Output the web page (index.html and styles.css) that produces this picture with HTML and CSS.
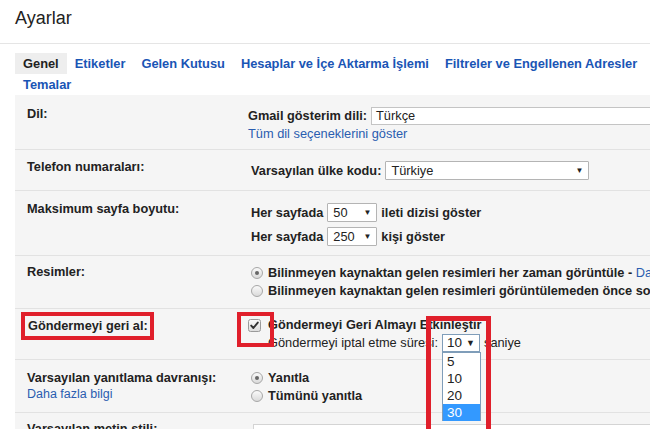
FILE: index.html
```html
<!DOCTYPE html>
<html lang="tr">
<head>
<meta charset="utf-8">
<title>Ayarlar</title>
<link rel="stylesheet" href="styles.css">
</head>
<body>
<h1 class="title">Ayarlar</h1>
<div class="divider"></div>
<nav class="tabs">
  <span class="tab tab-active">Genel</span>
  <span class="tab">Etiketler</span>
  <span class="tab">Gelen Kutusu</span>
  <span class="tab">Hesaplar ve İçe Aktarma İşlemi</span>
  <span class="tab">Filtreler ve Engellenen Adresler</span>
  <span class="tab">Temalar</span>
</nav>
<div class="settings">
  <div class="row row-dil">
    <div class="label">Dil:</div>
    <div class="value">
      <div class="line"><b>Gmail gösterim dili:</b><span class="textbox">Türkçe</span></div>
      <div class="line-link"><span class="link">Tüm dil seçeneklerini göster</span></div>
    </div>
  </div>
  <div class="row row-tel">
    <div class="label">Telefon numaraları:</div>
    <div class="value indent">
      <div class="line"><b>Varsayılan ülke kodu:</b><span class="select select-country"><span>Türkiye</span><span class="arrow">▼</span></span></div>
    </div>
  </div>
  <div class="row row-max">
    <div class="label">Maksimum sayfa boyutu:</div>
    <div class="value indent">
      <div class="line"><b>Her sayfada</b><span class="select select-small"><span>50</span><span class="arrow">▼</span></span><b>ileti dizisi göster</b></div>
      <div class="line line-gap"><b>Her sayfada</b><span class="select select-small"><span>250</span><span class="arrow">▼</span></span><b>kişi göster</b></div>
    </div>
  </div>
  <div class="row row-img">
    <div class="label">Resimler:</div>
    <div class="value indent">
      <div class="line line-radio"><span class="radio radio-on"></span><b>Bilinmeyen kaynaktan gelen resimleri her zaman görüntüle - <span class="link">Daha fazla bilgi</span></b></div>
      <div class="line line-radio"><span class="radio"></span><b>Bilinmeyen kaynaktan gelen resimleri görüntülemeden önce sor</b></div>
    </div>
  </div>
  <div class="row row-undo">
    <div class="label"><span class="mark">Göndermeyi geri al:</span></div>
    <div class="value">
      <div class="line"><span class="check"><svg width="13" height="13" viewBox="0 0 13 13"><defs><linearGradient id="cb" x1="0" y1="0" x2="0" y2="1"><stop offset="0" stop-color="#fbfbfb"/><stop offset="1" stop-color="#dcdcdc"/></linearGradient></defs><rect x="0.5" y="0.5" width="12" height="12" rx="2" fill="url(#cb)" stroke="#9a9a9a"/><path d="M3.2 6.6 L5.4 9 L9.8 3.6" fill="none" stroke="#333" stroke-width="1.9" stroke-linecap="round" stroke-linejoin="round"/></svg></span><b class="check-text">Göndermeyi Geri Almayı Etkinleştir</b></div>
      <div class="line line-sub"><span>Göndermeyi iptal etme süresi:</span><span class="duration"><span class="duration-box"><span>10</span><span class="arrow arrow-dark">▼</span></span><span class="duration-list"><span class="opt">5</span><span class="opt">10</span><span class="opt">20</span><span class="opt opt-on">30</span></span><span class="callout"></span></span><span>saniye</span></div>
    </div>
  </div>
  <div class="row row-reply">
    <div class="label"><div>Varsayılan yanıtlama davranışı:</div><div class="link">Daha fazla bilgi</div></div>
    <div class="value indent">
      <div class="line line-radio"><span class="radio radio-on"></span><b>Yanıtla</b></div>
      <div class="line line-radio"><span class="radio"></span><b>Tümünü yanıtla</b></div>
    </div>
  </div>
  <div class="row row-style">
    <div class="label">Varsayılan metin stili:</div>
    <div class="value"><div class="editor"></div></div>
  </div>
</div>
</body>
</html>
```
FILE: styles.css
```css
* { box-sizing: border-box; }
html, body { margin: 0; }
body {
  width: 650px;
  height: 429px;
  overflow: hidden;
  background: #fff;
  color: #222;
  font-family: "Liberation Sans", Arial, sans-serif;
}
.title {
  margin: 0;
  padding: 6px 0 13px 15px;
  font-size: 18px;
  font-weight: normal;
  line-height: 24px;
  color: #222;
}
.divider { height: 1px; background: #e5e5e5; }
.tabs {
  display: flex;
  flex-wrap: wrap;
  margin-top: 9px;
  padding-left: 15px;
  font-size: 12.85px;
  font-weight: bold;
  line-height: 21px;
}
.tab { padding: 0 8px; color: #1a55b5; white-space: nowrap; }
.tab-active { background: #eeeeee; color: #222; }

.settings {
  margin-left: 15px;
  background: #f5f5f5;
  font-size: 12.8px;
}
.row {
  display: grid;
  grid-template-columns: 233px 1fr;
  border-bottom: 1px solid #e2e2e2;
}
.label {
  padding-left: 12px;
  font-weight: bold;
  font-size: 12.75px;
  line-height: 17px;
  white-space: nowrap;
}
.label .link { font-weight: normal; font-size: 12.5px; }
.value { white-space: nowrap; line-height: 18px; }
.value.indent { padding-left: 3px; }
.line { display: flex; align-items: center; height: 18px; gap: 4px; }
.line-radio { gap: 5px; }
.line-link { line-height: 17px; }
.link { color: #2a5db0; font-weight: normal; font-size: 12.8px; }
b { font-weight: bold; font-size: 12.75px; }

.row-dil .label { padding-top: 10px; }
.row-dil .value { padding-top: 12px; padding-bottom: 7px; }
.row-tel .label { padding-top: 8px; }
.row-tel .value { padding-top: 11px; padding-bottom: 10px; }
.row-tel .line { height: 19px; }
.row-max .label { padding-top: 9px; }
.row-max .value { padding-top: 12px; padding-bottom: 9px; }
.row-max .line { height: 19px; }
.row-max .line-gap { margin-top: 5px; }
.row-img .label { padding-top: 7px; }
.row-img .value { padding-top: 8px; padding-bottom: 8px; }
.row-undo .label { padding-top: 9px; line-height: 16px; }
.row-undo .value { padding-top: 7px; padding-bottom: 7px; }
.row-reply .label { padding-top: 9px; }
.row-reply .value { padding-top: 9px; padding-bottom: 7px; }
.row-style .label { padding-top: 7px; }
.row-style .value { padding-top: 11px; }

.textbox {
  display: inline-block;
  width: 300px;
  height: 18px;
  border: 1px solid #c4c4c4;
  background: #fff;
  padding-left: 4px;
  line-height: 16px;
  font-weight: normal;
}
.select {
  display: inline-flex;
  align-items: center;
  justify-content: space-between;
  height: 19px;
  border: 1px solid #b4b4b4;
  border-radius: 1px;
  background: #fff;
  padding: 0 5px 0 5px;
  font-weight: normal;
}
.select-country { width: 204px; }
.select-small { width: 50px; }
.arrow { font-size: 8px; color: #222; }

.radio {
  display: inline-block;
  width: 12px;
  height: 12px;
  border-radius: 50%;
  border: 1px solid #a7a7a7;
  background: linear-gradient(#fafafa, #dadada);
  position: relative;
  flex: none;
}
.radio-on::after {
  content: "";
  position: absolute;
  left: 3px;
  top: 3px;
  width: 4px;
  height: 4px;
  border-radius: 50%;
  background: #666;
}

.mark {
  display: inline-block;
  padding-left: 1px;
  outline: 4px solid #e01f2b;
  outline-offset: 2px;
}
.check {
  position: relative;
  display: inline-block;
  width: 13px;
  height: 13px;
  margin-right: 3px;
  flex: none;
}
.check svg { display: block; }
.check::after {
  content: "";
  position: absolute;
  left: -11px;
  top: -7px;
  width: 29px;
  height: 27px;
  border: 4px solid #e01f2b;
}
.line-sub { font-weight: normal; padding-left: 20px; gap: 4px; }
.duration { position: relative; display: inline-block; height: 18px; }
.duration-box {
  display: flex;
  align-items: center;
  justify-content: space-between;
  width: 38px;
  height: 18px;
  border: 1px solid #7f9db9;
  background: #fff;
  padding: 0 4px;
  font-size: 13.5px;
}
.arrow-dark { font-size: 9px; }
.duration-list {
  position: absolute;
  left: 0;
  top: 18px;
  width: 39px;
  height: 69px;
  border: 1px solid #7f9db9;
  background: #fff;
  display: flex;
  flex-direction: column;
  font-size: 13.5px;
  z-index: 2;
}
.opt { height: 17px; line-height: 17px; padding-left: 4px; color: #222; }
.opt-on { background: #3399ff; color: #fff; }
.callout {
  position: absolute;
  left: -16px;
  top: -18px;
  width: 65px;
  height: 120px;
  border: 5px solid #e01f2b;
  z-index: 3;
}
.editor {
  width: 420px;
  height: 30px;
  border: 1px solid #d4d4d4;
  background: #fff;
  margin-left: 5px;
}
```
